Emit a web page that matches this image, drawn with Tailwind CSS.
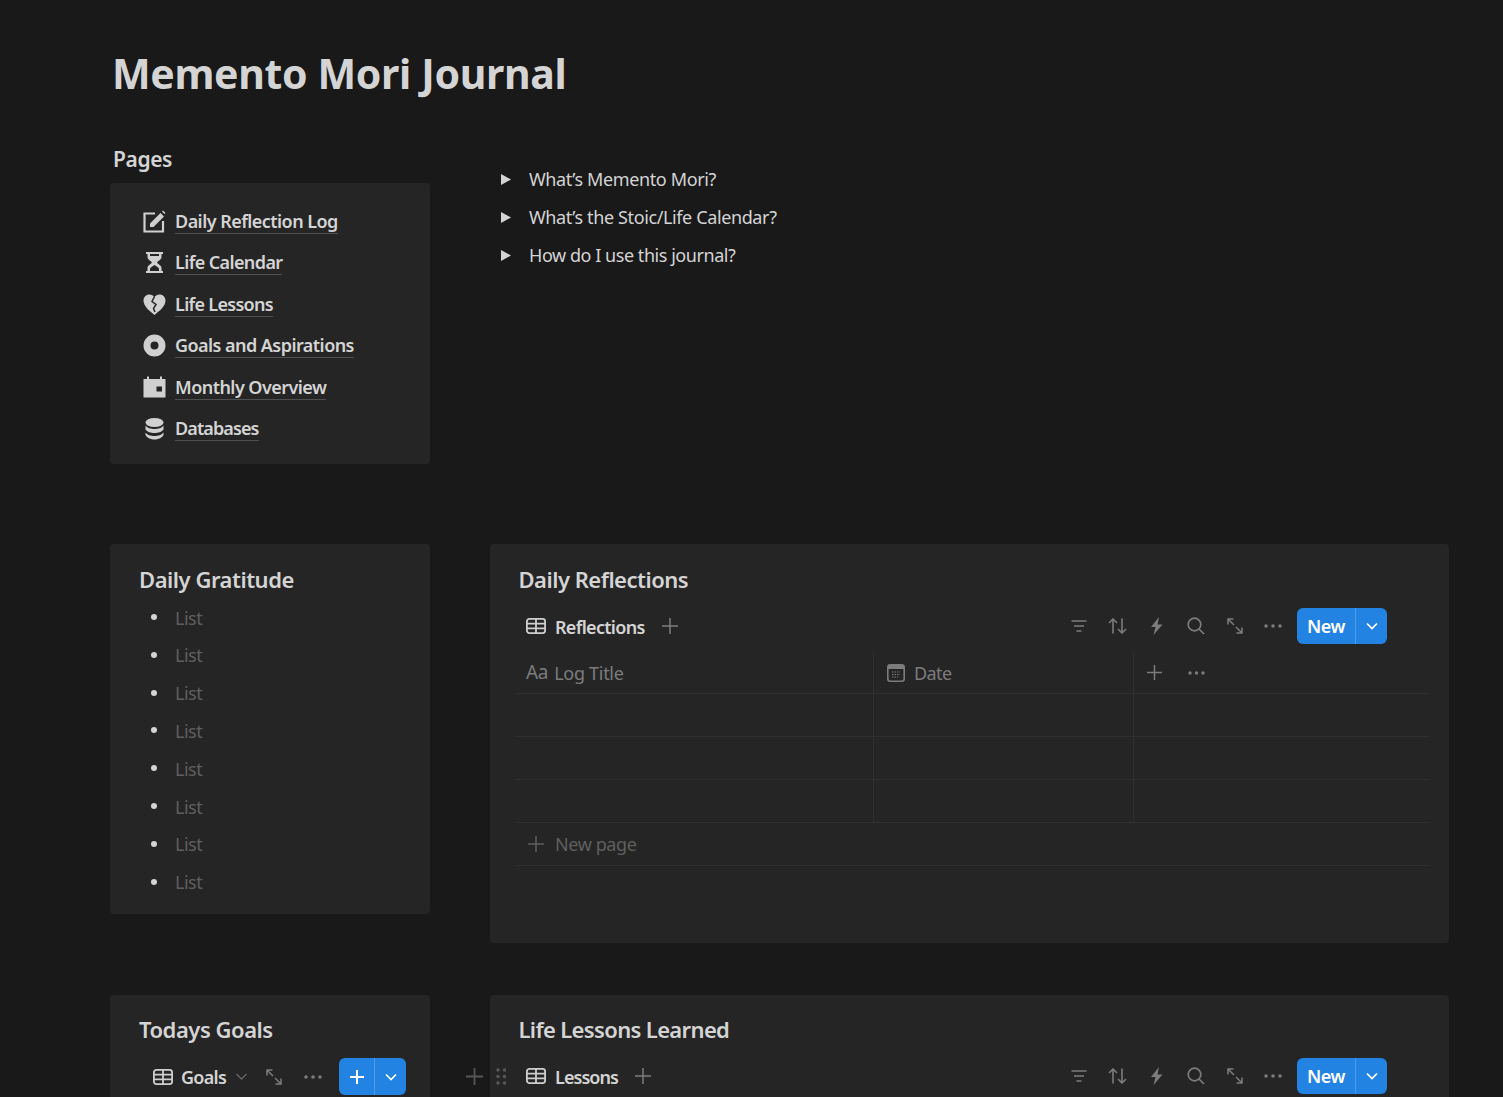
<!DOCTYPE html>
<html lang="en">
<head>
<meta charset="utf-8">
<title>Memento Mori Journal</title>
<script src="https://cdn.jsdelivr.net/npm/@tailwindcss/browser@4"></script>
</head>
<body class="bg-[#191919]">
<div class="h-[1097px] overflow-hidden px-[110px] pt-[47px] font-['Noto_Sans','Open_Sans',sans-serif] text-[#d4d4d4]">
  <h1 class="pl-[2px] h-[52px] leading-[52px] text-[41px] font-bold tracking-[-0.36px]">Memento Mori Journal</h1>

  <div class="mt-[44px] flex gap-[60px] items-start">
    <div class="w-[320px] shrink-0">
      <h3 class="pl-[3px] h-[34px] leading-[33px] text-[21px] font-semibold tracking-[-0.4px]">Pages</h3>
      <div class="mt-[6px] h-[281px] rounded-[4px] bg-[#252525] pl-[33px] pt-[17.6px] text-[18px] font-semibold tracking-[-0.55px]">
        <div class="h-[41.5px] flex items-center gap-[9px]">
          <svg class="w-[23px] h-[23px] shrink-0" viewBox="0 0 23 23" fill="none"><path d="M12 3.500H1.500V21.500H20V11" stroke="#d0d0d0" stroke-width="2.200"/><path d="M7 17V13.500L17.500 3L21 6.500L10.500 17Z" fill="#d0d0d0"/><path d="M19 1.500L20 .5L22.500 3L21.500 4Z" fill="#d0d0d0"/></svg>
          <span class="leading-[24px] border-b border-white/20">Daily Reflection Log</span>
        </div>
        <div class="h-[41.5px] flex items-center gap-[9px]">
          <svg class="w-[23px] h-[23px] shrink-0" viewBox="0 0 23 23" fill="#d0d0d0"><path d="M3 1H20V3H18.500V6C18.500 8.500 15 10 14 11.500C15 13 18.500 14.500 18.500 17V20H20V22H3V20H4.500V17C4.500 14.500 8 13 9 11.500C8 10 4.500 8.500 4.500 6V3H3ZM7 3V5H16V3ZM11.500 14C9.500 15.500 7 16.500 7 18V20H16V18C16 16.500 13.500 15.500 11.500 14Z" fill-rule="evenodd"/></svg>
          <span class="leading-[24px] border-b border-white/20 tracking-[-0.62px]">Life Calendar</span>
        </div>
        <div class="h-[41.5px] flex items-center gap-[9px]">
          <svg class="w-[23px] h-[23px] shrink-0" viewBox="0 0 23 23"><path d="M11.500 22C6 17.500.5 13 .5 7.500C.5 4.200 3 1.500 6.500 1.500C8.500 1.500 10.300 2.500 11.500 4C12.700 2.500 14.500 1.500 16.500 1.500C20 1.500 22.500 4.200 22.500 7.500C22.500 13 17 17.500 11.500 22Z" fill="#d0d0d0"/><path d="M11.500 3.500L9 8.500L13 11.500L10.500 15.500L12 19" fill="none" stroke="#252525" stroke-width="1.500"/></svg>
          <span class="leading-[24px] border-b border-white/20 tracking-[-0.7px]">Life Lessons</span>
        </div>
        <div class="h-[41.5px] flex items-center gap-[9px]">
          <svg class="w-[23px] h-[23px] shrink-0" viewBox="0 0 23 23" fill="none"><circle cx="11.500" cy="11.500" r="7.500" stroke="#d0d0d0" stroke-width="7"/></svg>
          <span class="leading-[24px] border-b border-white/20">Goals and Aspirations</span>
        </div>
        <div class="h-[41.5px] flex items-center gap-[9px]">
          <svg class="w-[23px] h-[23px] shrink-0" viewBox="0 0 23 23" fill="#d0d0d0"><path d="M.5 3H4V.5H6V3H17V.5H19V3H22.500V21.500H.5ZM13.500 10.500V15.500H19V10.500Z" fill-rule="evenodd"/></svg>
          <span class="leading-[24px] border-b border-white/20">Monthly Overview</span>
        </div>
        <div class="h-[41.5px] flex items-center gap-[9px]">
          <svg class="w-[23px] h-[23px] shrink-0" viewBox="0 0 23 23" fill="#d0d0d0"><ellipse cx="11.500" cy="5.500" rx="9" ry="4.500"/><path d="M2.500 8.500C4 11 8 12 11.500 12S19 11 20.500 8.500V12.500C19 15 15 16 11.500 16S4 15 2.500 12.500Z"/><path d="M2.500 15.500C4 18 8 19 11.500 19S19 18 20.500 15.500V18C19 21 15 22.500 11.500 22.500S4 21 2.500 18Z"/></svg>
          <span class="leading-[24px] border-b border-white/20 tracking-[-0.9px]">Databases</span>
        </div>
      </div>
    </div>
    <div class="pt-[18px] pl-[11px] text-[18px] tracking-[-0.38px]">
      <div class="h-[38px] flex items-center gap-[18px]"><svg class="w-[10px] h-[11px] -translate-y-[1px]" viewBox="0 0 10 11" fill="#d4d4d4"><path d="M0 0L10 5.500L0 11Z"/></svg><span class="-translate-y-[1px]">What’s Memento Mori?</span></div>
      <div class="h-[38px] flex items-center gap-[18px]"><svg class="w-[10px] h-[11px] -translate-y-[1px]" viewBox="0 0 10 11" fill="#d4d4d4"><path d="M0 0L10 5.500L0 11Z"/></svg><span class="-translate-y-[1px]">What’s the Stoic/Life Calendar?</span></div>
      <div class="h-[38px] flex items-center gap-[18px]"><svg class="w-[10px] h-[11px] -translate-y-[1px]" viewBox="0 0 10 11" fill="#d4d4d4"><path d="M0 0L10 5.500L0 11Z"/></svg><span class="-translate-y-[1px] tracking-[-0.45px]">How do I use this journal?</span></div>
    </div>
  </div>

  <div class="mt-[80px] flex gap-[60px] items-start">
    <div class="w-[320px] h-[370px] shrink-0 rounded-[4px] bg-[#252525] pt-[19px]">
      <h3 class="pl-[29px] h-[34px] leading-[32px] text-[22px] font-semibold tracking-[-0.47px]">Daily Gratitude</h3>
      <ul class="pt-[2.200px] pl-[41px] text-[18px] tracking-[-0.5px] text-[#5f5f5f]">
        <li class="h-[37.8px] flex items-center gap-[18px]"><span class="w-[6px] h-[6px] rounded-full bg-[#d4d4d4] -translate-y-[1px]"></span>List</li>
        <li class="h-[37.8px] flex items-center gap-[18px]"><span class="w-[6px] h-[6px] rounded-full bg-[#d4d4d4] -translate-y-[1px]"></span>List</li>
        <li class="h-[37.8px] flex items-center gap-[18px]"><span class="w-[6px] h-[6px] rounded-full bg-[#d4d4d4] -translate-y-[1px]"></span>List</li>
        <li class="h-[37.8px] flex items-center gap-[18px]"><span class="w-[6px] h-[6px] rounded-full bg-[#d4d4d4] -translate-y-[1px]"></span>List</li>
        <li class="h-[37.8px] flex items-center gap-[18px]"><span class="w-[6px] h-[6px] rounded-full bg-[#d4d4d4] -translate-y-[1px]"></span>List</li>
        <li class="h-[37.8px] flex items-center gap-[18px]"><span class="w-[6px] h-[6px] rounded-full bg-[#d4d4d4] -translate-y-[1px]"></span>List</li>
        <li class="h-[37.8px] flex items-center gap-[18px]"><span class="w-[6px] h-[6px] rounded-full bg-[#d4d4d4] -translate-y-[1px]"></span>List</li>
        <li class="h-[37.8px] flex items-center gap-[18px]"><span class="w-[6px] h-[6px] rounded-full bg-[#d4d4d4] -translate-y-[1px]"></span>List</li>
      </ul>
    </div>
    <div class="w-[959px] h-[399px] shrink-0 rounded-[4px] bg-[#252525] pt-[19px]">
      <h3 class="pl-[28.500px] h-[34px] leading-[32px] text-[22px] font-semibold tracking-[-0.5px]">Daily Reflections</h3>
      <div class="mt-[11px] h-[36px] ml-[36px] mr-[62px] flex items-center">
        <svg class="w-[20px] h-[16px] shrink-0" viewBox="0 0 20 16" fill="none" stroke="#cfcfcf" stroke-width="1.800"><rect x=".9" y=".9" width="18.200" height="14.200" rx="2.500"/><path d="M.9 5.600H19.100M.9 10.400H19.100M10 .9V15.100"/></svg>
        <span class="ml-[9px] text-[18px] font-semibold tracking-[-0.7px] translate-y-[1px]">Reflections</span>
        <svg class="ml-[17px] w-[16px] h-[16px]" viewBox="0 0 16 16" stroke="#7c7c7c" stroke-width="1.500"><path d="M8 0V16M0 8H16"/></svg>
        <div class="ml-auto flex items-center text-[#7c7c7c]">
          <div class="w-[38px] flex justify-center"><svg class="w-[16px] h-[14px]" viewBox="0 0 16 14" fill="none" stroke="#7c7c7c" stroke-width="1.600"><path d="M.5 2H15.500M3 7H13M5.500 12H10.500"/></svg></div>
          <div class="w-[39px] flex justify-center"><svg class="w-[19px] h-[16px]" viewBox="0 0 19 16" fill="none" stroke="#7c7c7c" stroke-width="1.600"><path d="M5 15.500V1M1 5L5 1L9 5M14 .5V15M10 11L14 15L18 11"/></svg></div>
          <div class="w-[39px] flex justify-center"><svg class="w-[13px] h-[18px]" viewBox="0 0 13 18" fill="#7c7c7c"><path d="M9 0L1 10H5.500L3.500 18L12.500 7.500H7.500Z"/></svg></div>
          <div class="w-[39px] flex justify-center"><svg class="w-[18px] h-[18px]" viewBox="0 0 18 18" fill="none" stroke="#7c7c7c" stroke-width="1.700"><circle cx="7.500" cy="7.500" r="6.300"/><path d="M12 12L17 17"/></svg></div>
          <div class="w-[39px] flex justify-center"><svg class="w-[16px] h-[16px]" viewBox="0 0 16 16" fill="none" stroke="#7c7c7c" stroke-width="1.500"><path d="M1 1L7 7M1 6.500V1H6.500M15 15L9 9M15 9.500V15H9.500"/></svg></div>
          <div class="w-[37px] flex justify-center"><svg class="w-[18px] h-[4px]" viewBox="0 0 18 4" fill="#7c7c7c"><circle cx="2" cy="2" r="1.800"/><circle cx="9" cy="2" r="1.800"/><circle cx="16" cy="2" r="1.800"/></svg></div>
          <div class="ml-[6px] w-[90px] h-[36px] rounded-[6px] bg-[#2383e2] text-white flex items-center">
            <span class="w-[59px] text-center text-[18px] font-semibold tracking-[-0.4px] border-r border-white/20 leading-[36px]">New</span>
            <svg class="ml-[10px] w-[12px] h-[8px]" viewBox="0 0 12 8" fill="none" stroke="#fff" stroke-width="1.700"><path d="M1 1.500L6 6.500L11 1.500"/></svg>
          </div>
        </div>
      </div>
      <div class="mt-[8px] ml-[26px] w-[913px]">
        <div class="grid grid-cols-[358px_260px_1fr] h-[42px] border-b border-[#2f2f2f] text-[18px] tracking-[-0.3px] text-[#7c7c7c]">
          <div class="border-r border-[#2f2f2f] pl-[10px] flex items-center"><span class="text-[19px]">Aa</span><span class="ml-[6px] translate-y-[1px]">Log Title</span></div>
          <div class="border-r border-[#2f2f2f] pl-[13px] flex items-center"><svg class="w-[18px] h-[18px]" viewBox="0 0 18 18" fill="none"><rect x=".8" y=".8" width="16.400" height="16.400" rx="2.500" stroke="#7c7c7c" stroke-width="1.600"/><path d="M1 1H17V5H1Z" fill="#7c7c7c"/><path d="M5 8H13M5 10.500H13M5 13H11" stroke="#7c7c7c" stroke-dasharray="1.500 1"/></svg><span class="ml-[9px] translate-y-[1px] tracking-[-0.6px]">Date</span></div>
          <div class="pl-[13px] flex items-center gap-[26px]"><svg class="w-[15px] h-[15px]" viewBox="0 0 15 15" stroke="#7c7c7c" stroke-width="1.500"><path d="M7.500 0V15M0 7.500H15"/></svg><svg class="w-[17px] h-[4px]" viewBox="0 0 17 4" fill="#7c7c7c"><circle cx="2" cy="2" r="1.700"/><circle cx="8.500" cy="2" r="1.700"/><circle cx="15" cy="2" r="1.700"/></svg></div>
        </div>
        <div class="grid grid-cols-[358px_260px_1fr] h-[43px] border-b border-[#2f2f2f]"><div class="border-r border-[#2f2f2f]"></div><div class="border-r border-[#2f2f2f]"></div><div></div></div>
        <div class="grid grid-cols-[358px_260px_1fr] h-[43px] border-b border-[#2f2f2f]"><div class="border-r border-[#2f2f2f]"></div><div class="border-r border-[#2f2f2f]"></div><div></div></div>
        <div class="grid grid-cols-[358px_260px_1fr] h-[43px] border-b border-[#2f2f2f]"><div class="border-r border-[#2f2f2f]"></div><div class="border-r border-[#2f2f2f]"></div><div></div></div>
        <div class="h-[43px] border-b border-[#2f2f2f] pl-[12px] flex items-center gap-[11px] text-[18px] tracking-[-0.4px] text-[#5f5f5f]"><svg class="w-[16px] h-[16px]" viewBox="0 0 16 16" stroke="#5f5f5f" stroke-width="1.500"><path d="M8 0V16M0 8H16"/></svg><span>New page</span></div>
      </div>
    </div>
  </div>

  <div class="mt-[52px] flex gap-[60px] items-start">
    <div class="w-[320px] h-[200px] shrink-0 rounded-[4px] bg-[#252525] pt-[18px] relative">
      <h3 class="pl-[29px] h-[34px] leading-[32px] text-[22px] font-semibold tracking-[-0.47px]">Todays Goals</h3>
      <div class="mt-[11px] h-[37px] pl-[43px] flex items-center">
        <svg class="w-[20px] h-[16px] shrink-0" viewBox="0 0 20 16" fill="none" stroke="#cfcfcf" stroke-width="1.800"><rect x=".9" y=".9" width="18.200" height="14.200" rx="2.500"/><path d="M.9 5.600H19.100M.9 10.400H19.100M10 .9V15.100"/></svg>
        <span class="ml-[8px] text-[18px] font-semibold tracking-[-0.7px] translate-y-[1px]">Goals</span>
        <svg class="ml-[10px] w-[11px] h-[7px]" viewBox="0 0 11 7" fill="none" stroke="#666" stroke-width="1.300"><path d="M.5 1L5.500 6L10.500 1"/></svg>
        <svg class="ml-[19px] w-[16px] h-[16px]" viewBox="0 0 16 16" fill="none" stroke="#7c7c7c" stroke-width="1.500"><path d="M1 1L7 7M1 6.500V1H6.500M15 15L9 9M15 9.500V15H9.500"/></svg>
        <svg class="ml-[22px] w-[18px] h-[4px]" viewBox="0 0 18 4" fill="#7c7c7c"><circle cx="2" cy="2" r="1.800"/><circle cx="9" cy="2" r="1.800"/><circle cx="16" cy="2" r="1.800"/></svg>
        <div class="ml-[17px] w-[67px] h-[37px] rounded-[6px] bg-[#2383e2] flex items-center">
          <div class="w-[36px] h-[37px] border-r border-white/20 flex items-center justify-center"><svg class="w-[14px] h-[14px]" viewBox="0 0 14 14" stroke="#fff" stroke-width="2"><path d="M7 0V14M0 7H14"/></svg></div>
          <svg class="ml-[10px] w-[12px] h-[8px]" viewBox="0 0 12 8" fill="none" stroke="#fff" stroke-width="1.700"><path d="M1 1.500L6 6.500L11 1.500"/></svg>
        </div>
      </div>
    </div>
    <div class="w-[959px] h-[200px] shrink-0 rounded-[4px] bg-[#252525] pt-[18px] relative">
      <div class="absolute left-[-24px] top-[73px] flex items-center gap-[13px]">
        <svg class="w-[17px] h-[17px]" viewBox="0 0 17 17" stroke="#565656" stroke-width="1.800"><path d="M8.500 0V17M0 8.500H17"/></svg>
        <svg class="w-[10px] h-[17px]" viewBox="0 0 10 17" fill="#565656"><circle cx="2" cy="2" r="1.800"/><circle cx="8.500" cy="2" r="1.800"/><circle cx="2" cy="8.500" r="1.800"/><circle cx="8.500" cy="8.500" r="1.800"/><circle cx="2" cy="15" r="1.800"/><circle cx="8.500" cy="15" r="1.800"/></svg>
      </div>
      <h3 class="pl-[28.500px] h-[34px] leading-[32px] text-[22px] font-semibold tracking-[-0.65px]">Life Lessons Learned</h3>
      <div class="mt-[11px] h-[36px] ml-[36px] mr-[62px] flex items-center">
        <svg class="w-[20px] h-[16px] shrink-0" viewBox="0 0 20 16" fill="none" stroke="#cfcfcf" stroke-width="1.800"><rect x=".9" y=".9" width="18.200" height="14.200" rx="2.500"/><path d="M.9 5.600H19.100M.9 10.400H19.100M10 .9V15.100"/></svg>
        <span class="ml-[9px] text-[18px] font-semibold tracking-[-0.95px] translate-y-[1px]">Lessons</span>
        <svg class="ml-[17px] w-[16px] h-[16px]" viewBox="0 0 16 16" stroke="#7c7c7c" stroke-width="1.500"><path d="M8 0V16M0 8H16"/></svg>
        <div class="ml-auto flex items-center">
          <div class="w-[38px] flex justify-center"><svg class="w-[16px] h-[14px]" viewBox="0 0 16 14" fill="none" stroke="#7c7c7c" stroke-width="1.600"><path d="M.5 2H15.500M3 7H13M5.500 12H10.500"/></svg></div>
          <div class="w-[39px] flex justify-center"><svg class="w-[19px] h-[16px]" viewBox="0 0 19 16" fill="none" stroke="#7c7c7c" stroke-width="1.600"><path d="M5 15.500V1M1 5L5 1L9 5M14 .5V15M10 11L14 15L18 11"/></svg></div>
          <div class="w-[39px] flex justify-center"><svg class="w-[13px] h-[18px]" viewBox="0 0 13 18" fill="#7c7c7c"><path d="M9 0L1 10H5.500L3.500 18L12.500 7.500H7.500Z"/></svg></div>
          <div class="w-[39px] flex justify-center"><svg class="w-[18px] h-[18px]" viewBox="0 0 18 18" fill="none" stroke="#7c7c7c" stroke-width="1.700"><circle cx="7.500" cy="7.500" r="6.300"/><path d="M12 12L17 17"/></svg></div>
          <div class="w-[39px] flex justify-center"><svg class="w-[16px] h-[16px]" viewBox="0 0 16 16" fill="none" stroke="#7c7c7c" stroke-width="1.500"><path d="M1 1L7 7M1 6.500V1H6.500M15 15L9 9M15 9.500V15H9.500"/></svg></div>
          <div class="w-[37px] flex justify-center"><svg class="w-[18px] h-[4px]" viewBox="0 0 18 4" fill="#7c7c7c"><circle cx="2" cy="2" r="1.800"/><circle cx="9" cy="2" r="1.800"/><circle cx="16" cy="2" r="1.800"/></svg></div>
          <div class="ml-[6px] w-[90px] h-[36px] rounded-[6px] bg-[#2383e2] text-white flex items-center">
            <span class="w-[59px] text-center text-[18px] font-semibold tracking-[-0.4px] border-r border-white/20 leading-[36px]">New</span>
            <svg class="ml-[10px] w-[12px] h-[8px]" viewBox="0 0 12 8" fill="none" stroke="#fff" stroke-width="1.700"><path d="M1 1.500L6 6.500L11 1.500"/></svg>
          </div>
        </div>
      </div>
    </div>
  </div>
</div>
</body>
</html>
